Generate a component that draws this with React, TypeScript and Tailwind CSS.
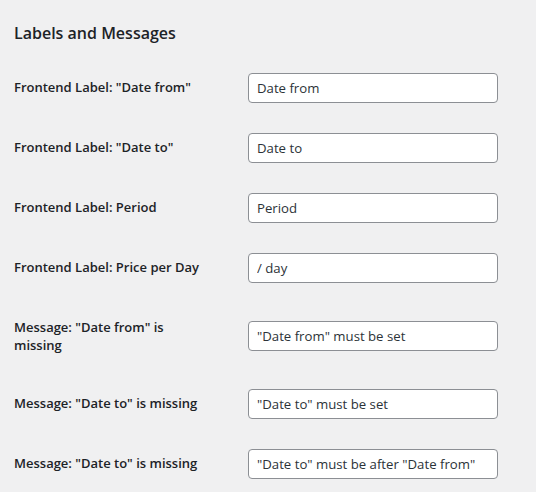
const rows: { label: string; value: string }[] = [
  { label: 'Frontend Label: "Date from"', value: 'Date from' },
  { label: 'Frontend Label: "Date to"', value: 'Date to' },
  { label: 'Frontend Label: Period', value: 'Period' },
  { label: 'Frontend Label: Price per Day', value: '/ day' },
  { label: 'Message: "Date from" is missing', value: '"Date from" must be set' },
  { label: 'Message: "Date to" is missing', value: '"Date to" must be set' },
  { label: 'Message: "Date to" is missing', value: '"Date to" must be after "Date from"' },
];

export default function App() {
  return (
    <div className="min-h-[492px] w-[536px] bg-[#f0f0f1] pl-[14px] text-[#1d2327] [font-family:'Open_Sans',sans-serif]">
      {/* Section heading */}
      <h2 className="pt-[22px] text-[16px] font-semibold leading-[23.7px]">Labels and Messages</h2>

      <div className="mt-[12px] flex flex-col">
        {rows.map((row, i) => (
          <div key={i} className="flex">
            <div className="w-[234px] shrink-0 py-5">
              <div className="max-w-[200px] text-[13px] font-semibold leading-[18.2px]">{row.label}</div>
            </div>
            <div className="flex items-center py-[15px]">
              <input
                readOnly
                value={row.value}
                className="h-[30px] w-[250px] rounded-[4px] border border-[#8c8f94] bg-white px-2 text-[13.2px] text-[#2c3338] outline-none"
              />
            </div>
          </div>
        ))}
      </div>
    </div>
  );
}
